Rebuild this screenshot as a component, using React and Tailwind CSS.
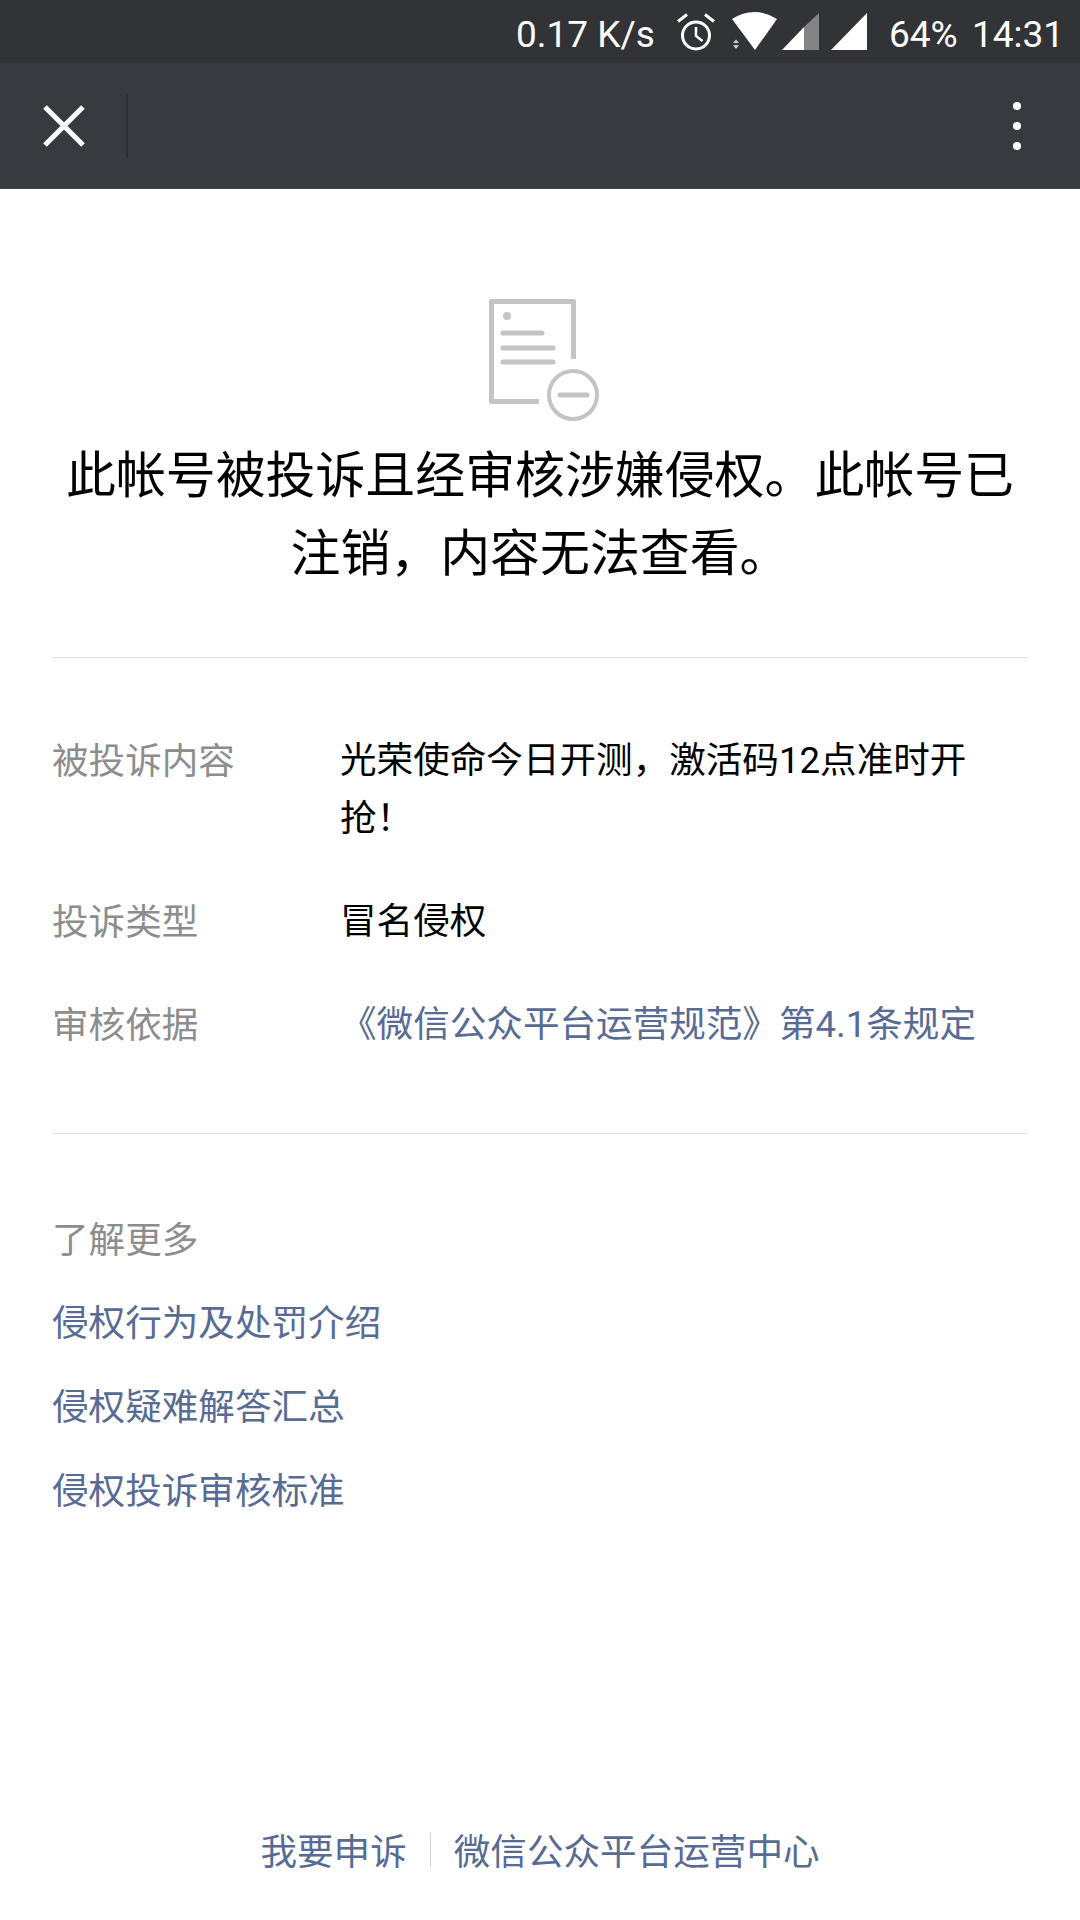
import React from "react";

const cjk = { fontFamily: '"Noto Sans CJK SC", "Noto Sans", sans-serif' };
const mixed = { fontFamily: 'Roboto, "Noto Sans CJK SC", sans-serif' };

function Row({ label, children, cls }) {
  return (
    <div className="flex">
      <div className="w-[288px] shrink-0 text-[#8d8d8d]">{label}</div>
      <div className={cls} style={mixed}>{children}</div>
    </div>
  );
}

export default function App() {
  return (
    <div className="w-[1080px] h-[1920px] bg-white flex flex-col overflow-hidden" style={cjk}>
      <div className="h-[63px] shrink-0 bg-[#323337] flex items-center text-white text-[37px] font-['Roboto',sans-serif] pl-[516px]">
        <span className="w-[161px] pt-[6px]">0.17 K/s</span>
        <svg width="38" height="38" viewBox="0 0 38 38" className="mr-[17px] mt-[1px]" fill="none" stroke="white">
          <circle cx="19" cy="22.500" r="13.500" strokeWidth="3" />
          <path d="M19 14v9l6.500 5" strokeWidth="2.500" />
          <path d="M1 8.500L10 1.500M37 8.500L28 1.500" strokeWidth="3" />
        </svg>
        <svg width="136" height="40" viewBox="0 0 136 40" className="mr-[21px] mt-[1px]" fill="white">
          <path d="M0 7Q22-7 45 7L23 38Z" />
          <path d="M1 31l3-3.500 3 3.500zM1 33h6l-3 4z" opacity=".75" />
          <path d="M50 38L72 15V38Z" />
          <path d="M72 15L87 1V38H72Z" opacity=".4" />
          <path d="M99 38L135 1V38Z" />
        </svg>
        <span className="w-[83px] pt-[6px]">64%</span>
        <span className="pt-[6px]">14:31</span>
      </div>

      <div className="h-[126px] shrink-0 bg-[#393a3f] flex items-center border-b border-[#45464b]">
        <div className="w-[128px] h-[64px] flex items-center justify-center border-r-2 border-[#2e2f33]">
          <svg width="44" height="44" viewBox="0 0 44 44" stroke="white" strokeWidth="5" className="ml-[1px]">
            <path d="M3 3L41 41M41 3L3 41" />
          </svg>
        </div>
        <div className="ml-auto mr-[59px] flex flex-col gap-[12px]">
          <div className="w-[8px] h-[8px] rounded-full bg-white" />
          <div className="w-[8px] h-[8px] rounded-full bg-white" />
          <div className="w-[8px] h-[8px] rounded-full bg-white" />
        </div>
      </div>

      <div className="flex flex-col px-[52px] flex-1">
        <div className="flex justify-center pt-[110px] pl-[9px]">
          <svg width="111" height="122" viewBox="0 0 111 122" fill="none" stroke="#c4c4c4" strokeWidth="5">
            <path d="M50 102.500H2.500V2.500H84.500V60" strokeLinejoin="round" />
            <circle cx="18" cy="17" r="4" fill="#c4c4c4" stroke="none" />
            <path d="M14 34H53M14 49H64M14 63H64M71 96H98" strokeLinecap="round" />
            <circle cx="84" cy="96" r="24" strokeWidth="4" />
          </svg>
        </div>
        <div className="mt-[11px] text-[49.900px] leading-[78px] text-black text-center -mx-[4px]">
          此帐号被投诉且经审核涉嫌侵权。此帐号已注销，内容无法查看。
        </div>
        <div className="mt-[69px] h-px bg-[#e2e2e2]" />
        <div className="mt-[72px] flex flex-col gap-[45px] text-[36.600px] leading-[58px]">
          <Row label="被投诉内容" cls="text-black w-[650px] pt-[2px] -mb-[2px]">光荣使命今日开测，激活码12点准时开抢！</Row>
          <Row label="投诉类型" cls="text-black pt-[2px] -mb-[2px]">冒名侵权</Row>
          <Row label="审核依据" cls="text-[#576b95] pt-[2px] -mb-[2px]">《微信公众平台运营规范》第4.1条规定</Row>
        </div>
        <div className="mt-[81px] h-px bg-[#e2e2e2]" />
        <div className="mt-[75px] text-[36.600px] leading-[58px] text-[#8d8d8d]">了解更多</div>
        <div className="mt-[25px] flex flex-col gap-[26px] text-[36.600px] leading-[58px] text-[#576b95]">
          <div>侵权行为及处罚介绍</div>
          <div>侵权疑难解答汇总</div>
          <div>侵权投诉审核标准</div>
        </div>
        <div className="mt-auto mb-[41px] flex justify-center items-center text-[36.600px] leading-[58px] text-[#576b95]">
          <span>我要申诉</span>
          <span className="w-px h-[34px] bg-[#d0d0d0] mx-[23px]" />
          <span>微信公众平台运营中心</span>
        </div>
      </div>
    </div>
  );
}
